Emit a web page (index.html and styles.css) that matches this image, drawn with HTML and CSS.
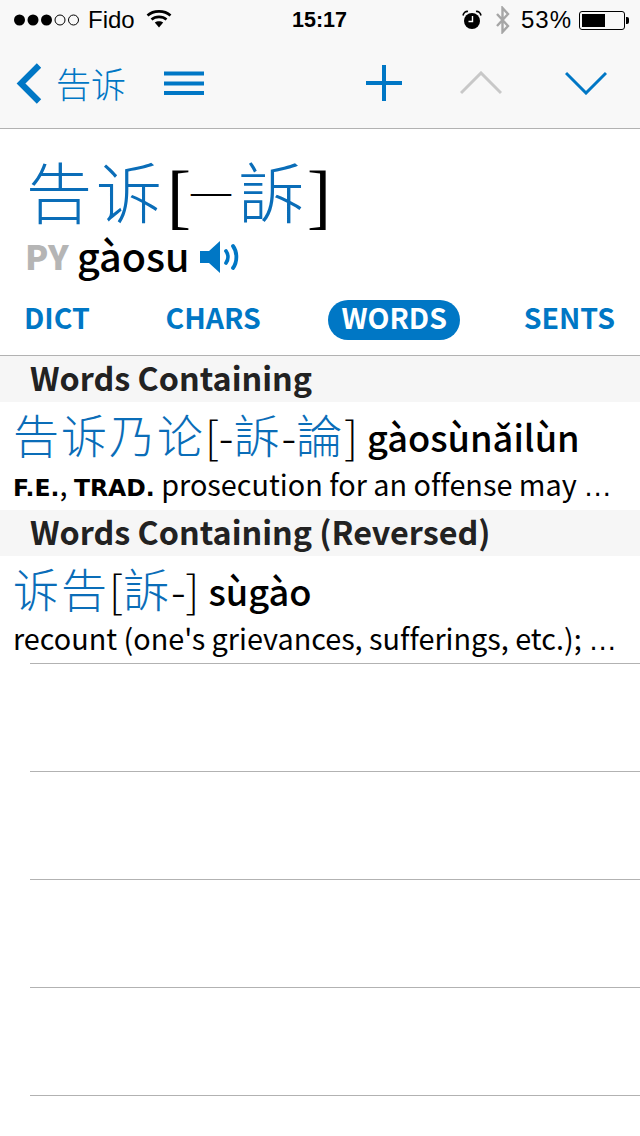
FILE: index.html
```html
<!DOCTYPE html>
<html lang="zh">
<head>
<meta charset="utf-8">
<title>告诉</title>
<link rel="stylesheet" href="styles.css">
</head>
<body>
<header class="top">
  <div class="status">
    <div class="status-side">
      <svg class="dots" width="68" height="14" viewBox="0 0 68 14"><g fill="#000"><circle cx="6.5" cy="7" r="5.5"/><circle cx="20" cy="7" r="5.5"/><circle cx="33.500" cy="7" r="5.500"/></g><g fill="none" stroke="#000" stroke-width="1"><circle cx="47" cy="7" r="5"/><circle cx="60.500" cy="7" r="5"/></g></svg>
      <span class="carrier">Fido</span>
      <svg class="wifi" width="26" height="20" viewBox="0 0 26 20"><g fill="none" stroke="#000" stroke-width="2.600"><path d="M1.500 6.500C7.500 1 18.500 1 24.500 6.500"/><path d="M5.500 10.500C9.500 7 16.500 7 20.500 10.500"/></g><path d="M8.800 13.600C11 11.800 15 11.800 17.200 13.600L13 18.500z" fill="#000"/></svg>
    </div>
    <span class="clock">15:17</span>
    <div class="status-side">
      <svg class="alarm" width="20" height="20" viewBox="0 0 20 20"><circle cx="10" cy="11" r="8" fill="#000"/><path d="M1 5.500C1.500 2.500 4 1 6 1.500M19 5.500C18.500 2.500 16 1 14 1.500" fill="none" stroke="#000" stroke-width="1.600"/><path d="M10.500 6v5.500H6.500" fill="none" stroke="#fff" stroke-width="1.400"/></svg>
      <svg class="bt" width="18" height="28" viewBox="0 0 18 28"><path d="M3 8l11 12-5.500 6V2L14 8 3 20" fill="none" stroke="#a6a6a6" stroke-width="2.400"/></svg>
      <span class="percent">53%</span>
      <div class="battery"><div class="battery-level"></div></div>
    </div>
  </div>
  <nav class="nav">
    <div class="nav-left">
      <svg class="back" width="26" height="42" viewBox="0 0 26 42"><path d="M23 3.500L5 21.500l18 18" fill="none" stroke="#0077c5" stroke-width="6.200"/></svg>
      <span class="back-label">告诉</span>
      <svg class="menu" width="40" height="24" viewBox="0 0 40 24"><path d="M0 2.500h40M0 12.500h40M0 22h40" stroke="#0077c5" stroke-width="4"/></svg>
    </div>
    <div class="nav-right">
      <svg class="plus" width="36" height="36" viewBox="0 0 36 36"><path d="M18 0v36M0 18h36" stroke="#0077c5" stroke-width="4"/></svg>
      <svg class="prev" width="42" height="24" viewBox="0 0 42 24"><path d="M1 22L21 2l20 20" fill="none" stroke="#c8c8c8" stroke-width="3"/></svg>
      <svg class="next" width="42" height="24" viewBox="0 0 42 24"><path d="M1 2l20 20L41 2" fill="none" stroke="#0077c5" stroke-width="3"/></svg>
    </div>
  </nav>
</header>

<section class="headword">
  <div class="hanzi-line"><span class="zh">告诉</span><span class="bracket">[</span><span class="dash">—</span><span class="zh zh-trad">訴</span><span class="bracket">]</span></div>
  <div class="pinyin-line"><span class="py">PY</span><span class="pinyin">gàosu</span>
    <svg class="speaker" width="40" height="34" viewBox="0 0 40 34"><path d="M0 11h9L20 1v32L9 23H0z" fill="#0077c5"/><path d="M26 11c2.500 3.500 2.500 8.500 0 12M33 6c4.500 6 4.500 16 0 22" fill="none" stroke="#0077c5" stroke-width="3.800" stroke-linecap="round"/></svg>
  </div>
</section>

<div class="tabs">
  <span class="tab">DICT</span>
  <span class="tab">CHARS</span>
  <span class="tab tab-active">WORDS</span>
  <span class="tab">SENTS</span>
</div>

<h2 class="section">Words Containing</h2>
<article class="entry">
  <div class="entry-head"><span class="zh">告诉乃论</span><span class="plain">[-</span><span class="zh">訴</span><span class="plain">-</span><span class="zh">論</span><span class="plain">]</span><b class="entry-py">gàosùnǎilùn</b></div>
  <p class="entry-def" lang="en"><b class="tag">F.E.</b>, <b class="tag">TRAD.</b> prosecution for an offense may <span class="ell">…</span></p>
</article>
<h2 class="section">Words Containing (Reversed)</h2>
<article class="entry entry-last">
  <div class="entry-head"><span class="zh">诉告</span><span class="plain">[</span><span class="zh">訴</span><span class="plain">-]</span><b class="entry-py">sùgào</b></div>
  <p class="entry-def" lang="en">recount (one's grievances, sufferings, etc.); <span class="ell">…</span></p>
</article>
<div class="empty-row"></div>
<div class="empty-row"></div>
<div class="empty-row"></div>
<div class="empty-row"></div>
<div class="empty-row empty-row-last"></div>
</body>
</html>
```
FILE: styles.css
```css
* { box-sizing: border-box; }
html, body { margin: 0; padding: 0; }
body {
  width: 640px;
  height: 1136px;
  overflow: hidden;
  background: #fff;
  color: #000;
  font-family: "Noto Sans CJK SC", "Noto Sans", sans-serif;
}
.top { background: #f8f8f8; border-bottom: 1px solid #b2b2b2; height: 129px; }
.status {
  height: 40px;
  padding: 0 15px 0 13px;
  display: flex;
  align-items: center;
  justify-content: space-between;
  font-family: "Liberation Sans", sans-serif;
  font-size: 24px;
}
.status-side { display: flex; align-items: center; }
.carrier { margin-left: 7px; width: 57px; }
.wifi { margin-left: 1px; margin-bottom: 2px; }
.clock { font-weight: 700; font-size: 21.5px; position: absolute; left: 292px; }
.alarm { margin-right: 12px; }
.bt { margin-right: 9px; }
.percent { letter-spacing: 1px; margin-right: 7px; }
.battery {
  width: 46px;
  height: 19px;
  border: 1px solid #000;
  border-radius: 3px;
  padding: 2px;
  position: relative;
}
.battery::after {
  content: "";
  position: absolute;
  right: -5px;
  top: 5px;
  width: 3px;
  height: 7px;
  background: #000;
  border-radius: 0 2px 2px 0;
}
.battery-level { width: 23px; height: 100%; background: #000; }
.nav {
  height: 88px;
  display: flex;
  justify-content: space-between;
  align-items: center;
  padding: 0 33px 3px 16px;
}
.nav-left, .nav-right { display: flex; align-items: center; }
.back-label { color: #0077c5; font-size: 35px; line-height: 42px; margin-left: 14px; font-weight: 300; }
.menu { margin-left: 38px; }
.plus { margin-right: 58px; }
.prev { margin-right: 63px; }
.headword { height: 160px; padding: 21px 0 0 26px; }
.hanzi-line { display: flex; align-items: center; height: 82px; line-height: 82px; }
.zh { color: #0a6db8; font-family: "Noto Sans CJK SC", sans-serif; font-weight: 400; }
.hanzi-line .zh { font-weight: 300; font-size: 66px; letter-spacing: 4px; margin-bottom: 5px; }
.hanzi-line .zh-trad { margin-left: 7px; letter-spacing: 2px; }
.bracket { font-family: "Liberation Serif", serif; font-size: 72px; line-height: 82px; margin: 0 0 -10px 1px; }
.dash { font-family: "Liberation Serif", serif; font-size: 40px; width: 40px; }
.pinyin-line { display: flex; align-items: center; height: 42px; margin-top: 2px; }
.py { color: #b5b5b5; font-weight: 900; font-size: 34px; width: 52px; margin-left: -1px; }
.pinyin { font-weight: 500; font-size: 39.5px; line-height: 42px; }
.speaker { margin: 4px 0 0 11px; }
.tabs { height: 67px; border-bottom: 1px solid #b2b2b2; display: flex; justify-content: space-between; align-items: flex-start; padding: 11px 13px 0 12px; }
.tab {
  color: #0077c5;
  font-weight: 700;
  font-size: 28.5px;
  line-height: 33px;
  height: 40px;
  padding: 0 12px;
  border-radius: 20px;
}
.tab-active { background: #0077c5; color: #fff; padding: 0 13px; margin-left: 4px; }
.section {
  margin: 0;
  height: 46px;
  padding-left: 30px;
  background: #f6f6f6;
  color: #222;
  font-size: 32.3px;
  line-height: 42px;
  font-weight: 700;
}
.entry { height: 108px; padding: 0 0 0 13px; white-space: nowrap; }
.entry-last { height: 107px; }
.entry-head { display: flex; align-items: center; height: 66px; line-height: 66px; font-weight: 300; white-space: pre; }
.entry-head .zh { font-size: 46px; font-weight: 300; letter-spacing: 2px; margin-bottom: 4px; }
.plain { font-weight: 300; font-size: 44px; }
.entry-py { font-weight: 500; font-size: 36.2px; margin-left: 9px; margin-top: 2px; }
.entry-def { margin: 0; font-size: 28.8px; line-height: 31px; font-weight: 400; font-variant-ligatures: none; }
.ell { font-family: "Liberation Sans", sans-serif; }
.tag { font-family: "DejaVu Sans", sans-serif; font-size: 23.5px; font-weight: 700; }
.empty-row { height: 108px; margin-left: 30px; border-top: 1px solid #b2b2b2; }
.empty-row-last { height: 41px; }
```
